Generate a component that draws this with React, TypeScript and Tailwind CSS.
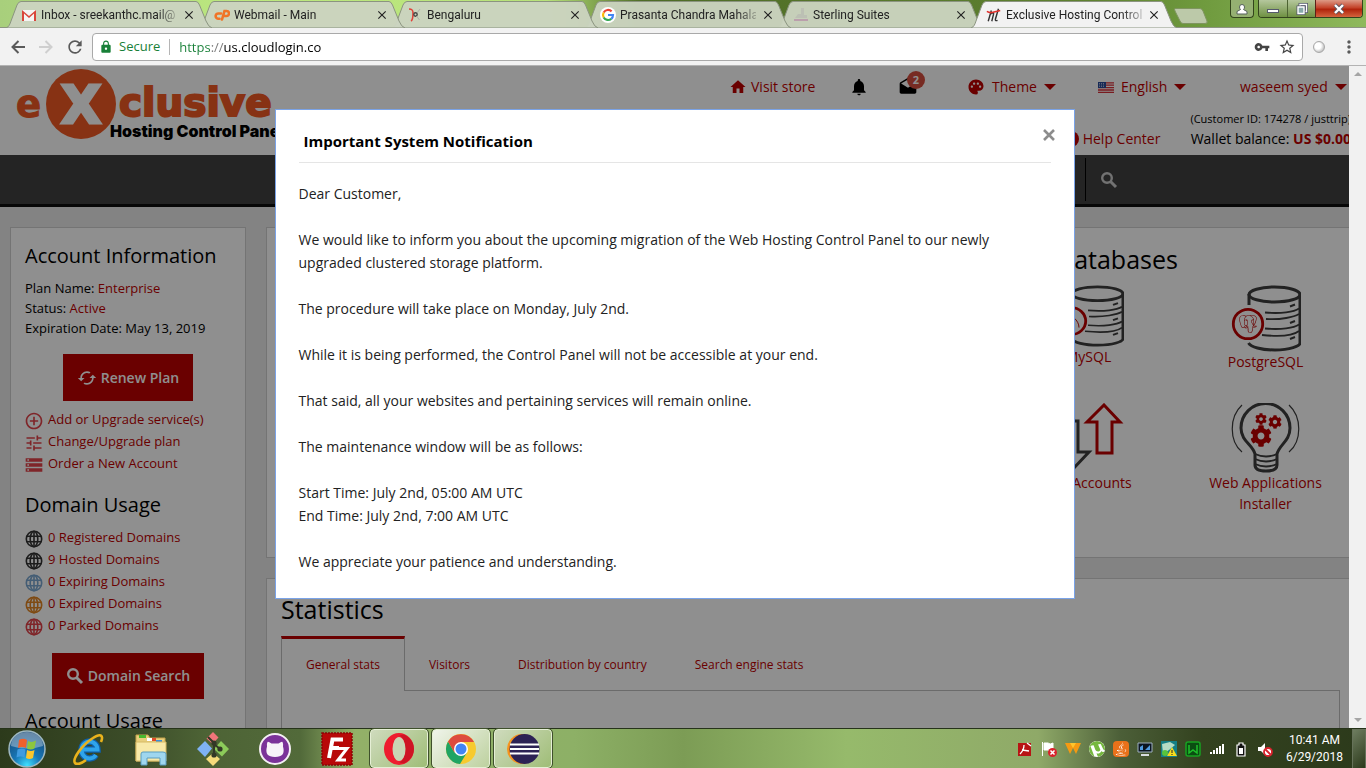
import type { ReactNode } from "react";
import {
  MdAddCircleOutline,
  MdClose,
  MdDrafts,
  MdHome,
  MdLock,
  MdMoreVert,
  MdNotifications,
  MdPalette,
  MdRefresh,
  MdStarBorder,
  MdStorage,
  MdSync,
  MdTune,
  MdVpnKey,
} from "react-icons/md";
import { FaCog, FaJava } from "react-icons/fa";
import { SiPostgresql, SiUtorrent } from "react-icons/si";

function GoogleMark() {
  return (
    <svg viewBox="0 0 16 16" className="size-4">
      <circle cx="8" cy="8" r="8" fill="#fff" />
      <g fill="none" strokeWidth="2.2">
        <path d="M11.6 4.4A5 5 0 0 0 3.7 5.5" stroke="#ea4335" />
        <path d="M3.7 5.5A5 5 0 0 0 3.7 10.5" stroke="#fbbc05" />
        <path d="M3.7 10.5A5 5 0 0 0 11.3 11.8" stroke="#34a853" />
        <path d="M11.3 11.8A5 5 0 0 0 13 8H8" stroke="#4285f4" />
      </g>
    </svg>
  );
}

function GmailMark() {
  return (
    <svg viewBox="0 0 16 16" className="size-4">
      <path d="M1 3h14v11H1z" fill="#f4f4f4" />
      <path d="M1 14V3l7 6 7-6v11h-2V6.6L8 11 3 6.6V14z" fill="#d9453a" />
    </svg>
  );
}

function PanelMark() {
  return (
    <svg viewBox="0 0 16 16" className="size-4" fill="none" stroke="#f07427" strokeWidth="2.600" strokeLinecap="round">
      <path d="M7 6.500H4.500A2.600 2.600 0 0 0 4 11.700H5.500" />
      <path d="M8 12.500L10.500 4H12.500A2.500 2.500 0 0 1 12.500 9H11" />
    </svg>
  );
}

function BirdMark() {
  return (
    <svg viewBox="0 0 16 16" className="size-4" fill="none">
      <path d="M2 2c4 0 4 2 4 4s0 7-2 8" stroke="#e2413a" strokeWidth="1.600" />
      <circle cx="8.500" cy="7.500" r="1.700" stroke="#444" strokeWidth="1.400" />
      <path d="M10 6l3-4M9.500 9l3 4" stroke="#b0b0aa" strokeWidth="1" />
    </svg>
  );
}

function SuitesMark() {
  return (
    <svg viewBox="0 0 16 16" className="size-4">
      <path d="M8 1h3v7h3v3H2l3-4h3z" fill="#bcc0b4" />
      <path d="M1 12h14v2H1z" fill="#bb9fac" />
    </svg>
  );
}

function HostMark() {
  return (
    <svg viewBox="0 0 18 18" className="size-[18px]" fill="none">
      <path d="M6 4L2.500 16M5 8Q9 5 8.500 8L6.500 16M14 2L10.500 14Q10.500 16 13 15" stroke="#333" strokeWidth="1.600" />
      <path d="M1 5Q4 7 8 6T16 4" stroke="#e0302c" strokeWidth="1.800" />
    </svg>
  );
}

function SearchGlyph() {
  return (
    <svg viewBox="0 0 18 18" className="size-[18px]" fill="none" stroke="currentColor">
      <circle cx="7" cy="7" r="4.800" strokeWidth="2.400" />
      <path d="M10.500 10.500L16 16" strokeWidth="3" />
    </svg>
  );
}

const TABS: { title: string; icon: ReactNode; active?: boolean }[] = [
  { title: "Inbox - sreekanthc.mail@", icon: <GmailMark /> },
  { title: "Webmail - Main", icon: <PanelMark /> },
  { title: "Bengaluru", icon: <BirdMark /> },
  { title: "Prasanta Chandra Mahala", icon: <GoogleMark /> },
  { title: "Sterling Suites", icon: <SuitesMark /> },
  { title: "Exclusive Hosting Control", icon: <HostMark />, active: true },
];

const Z = ["z-10", "z-[9]", "z-[8]", "z-[7]", "z-[6]", "z-20"];

function BrowserTab({ title, icon, active, z }: { title: string; icon: ReactNode; active?: boolean; z: string }) {
  return (
    <div className={`relative h-7 w-[193px] shrink-0 ${z}`}>
      <svg viewBox="0 0 206 28" className="absolute top-0 left-0 h-7 w-[206px]">
        <path
          d="M0 28C3 27 4 24 5 21L11 5Q12.500 1.500 15 1.500H190Q192 1.500 193.500 5L200 21Q202.500 27 206 28Z"
          fill={active ? "#f2f2f2" : "#cbd3bf"}
          fillOpacity={active ? 1 : 0.96}
          stroke="#8b9480"
        />
      </svg>
      <div className="relative flex h-7 items-center gap-1 pt-0.5 pl-[15px]">
        <span className="flex w-4 justify-center">{icon}</span>
        <span className="w-[136px] overflow-hidden whitespace-nowrap text-xs text-[#222] [mask-image:linear-gradient(to_right,black_85%,transparent_105%)]">
          {title}
        </span>
        <button aria-label={`Close ${title}`} className="flex size-4 items-center justify-center">
          <MdClose className="size-3.5 text-[#222]" />
        </button>
      </div>
    </div>
  );
}

function TabStrip() {
  return (
    <div className="relative flex h-7 shrink-0 border-b border-[#8b9480] bg-[linear-gradient(to_right,#a8cf7c,#bde97f_18%,#b8e27a_40%,#4e6b26_47%,#5f8230_80%,#6f9a3e_88%,#8fb95c)] pl-1.5 font-[Roboto,sans-serif]">
      {TABS.map((t, i) => (
        <BrowserTab key={t.title} {...t} z={Z[i]} />
      ))}
      <button aria-label="New tab" className="relative z-0 ml-2.5 h-7 w-9">
        <svg viewBox="0 0 36 28" className="h-7 w-9">
          <path d="M1 8.500H26Q28 8.500 29 11L33 21Q34 23.500 31 23.500H9Q7 23.500 6 21L1 11Q0 8.500 1 8.500Z" fill="#bcc9a9" stroke="#7f9560" />
        </svg>
      </button>
      <div className="ml-auto flex h-[18px] gap-1 pr-[3px]">
        <button aria-label="Profile" className="flex w-6 items-center justify-center rounded-b border border-t-0 border-[#33441c] bg-[#95b072]">
          <svg viewBox="0 0 12 12" className="size-3">
            <path d="M3.500 4a2.500 2.500 0 1 1 5 0Q8.500 5.500 7.500 6.500L11 8.500V11H1V8.500L4.500 6.500Q3.500 5.500 3.500 4Z" fill="#fff" stroke="#54605a" />
          </svg>
        </button>
        <div className="flex overflow-hidden rounded-b border border-t-0 border-[#33441c]">
          <button aria-label="Minimize" className="flex w-7 items-center justify-center bg-[linear-gradient(#b5c79d,#6f9142)]">
            <span className="mt-1 h-1 w-3 border border-[#555a6b] bg-white" />
          </button>
          <button aria-label="Restore" className="flex w-7 items-center justify-center border-l border-[#4d6332] bg-[linear-gradient(#b5c79d,#6f9142)]">
            <svg viewBox="0 0 12 12" className="size-3" fill="none">
              <path d="M4 3V1.500H10.500V8.500H9" stroke="#555a6b" strokeWidth="3" />
              <path d="M4 3V1.500H10.500V8.500H9" stroke="#fff" strokeWidth="1.400" />
              <path d="M2 4h6v6.500H2z" stroke="#555a6b" strokeWidth="3" />
              <path d="M2 4h6v6.500H2z" fill="#8aa" stroke="#fff" strokeWidth="1.400" />
            </svg>
          </button>
          <button aria-label="Close window" className="flex w-[47px] items-center justify-center border-l border-[#5c2018] bg-[linear-gradient(#dd9a86,#c4432a_45%,#b0240c_55%,#d4643e)]">
            <svg viewBox="0 0 12 12" className="size-3">
              <path d="M2 2L10 10M10 2L2 10" stroke="#5d5560" strokeWidth="4" />
              <path d="M2 2L10 10M10 2L2 10" stroke="#fff" strokeWidth="2.400" />
            </svg>
          </button>
        </div>
      </div>
    </div>
  );
}

function Arrow({ flip }: { flip?: boolean }) {
  return (
    <svg viewBox="0 0 14 14" className={`size-3.5 ${flip ? "rotate-180 text-[#cfcfcf]" : "text-[#5a5a5a]"}`} fill="none" stroke="currentColor" strokeWidth="2">
      <path d="M14 7H1.500M7.500 1L1.500 7L7.500 13" />
    </svg>
  );
}

function Toolbar() {
  return (
    <div className="flex h-[38px] shrink-0 items-center border-b border-[#b3b3b3] bg-[#f2f2f2] pl-[11px] text-[#5a5a5a]">
      <button aria-label="Back" className="w-7"><Arrow /></button>
      <button aria-label="Forward" className="w-[26px]"><Arrow flip /></button>
      <button aria-label="Reload" className="w-[27px]"><MdRefresh className="size-5" /></button>
      <div className="flex h-7 flex-1 items-center rounded-sm border border-[#a9a9a9] bg-white px-1.5">
        <MdLock className="size-3.5 text-[#188038]" />
        <label htmlFor="address" className="ml-1.5 text-[13px] text-[#188038]">Secure</label>
        <span className="mx-[9px] h-4 w-px bg-[#b5b5b5]" />
        <input
          id="address"
          defaultValue="https://us.cloudlogin.co"
          className="h-5 flex-1 bg-[linear-gradient(to_right,#188038_31px,#777_31px,#777_45px,#000_45px)] bg-clip-text text-[13px] text-transparent caret-black outline-none"
        />
        <MdVpnKey className="size-4 text-[#444]" />
        <MdStarBorder className="ml-2 size-[18px] text-[#444]" />
      </div>
      <span className="ml-2.5 size-3 rounded-full border border-[#a8a8a8] bg-[radial-gradient(circle_at_40%_40%,#fff_35%,#999)]" />
      <button aria-label="Menu" className="ml-3.5 w-[27px]"><MdMoreVert className="size-5" /></button>
    </div>
  );
}

function Caret() {
  return (
    <svg viewBox="0 0 12 6" className="h-1.5 w-3">
      <path d="M0 0H12L6 6Z" fill="currentColor" />
    </svg>
  );
}

function Logo() {
  return (
    <svg viewBox="0 0 330 80" className="h-20 w-[330px] [font-family:'DejaVu_Sans',sans-serif]" fontWeight="bold">
      <circle cx="81" cy="38" r="35" fill="#f15a24" />
      <text x="16" y="51" fontSize="37" fill="#f15a24" stroke="#f15a24">e</text>
      <text x="61" y="57" fontSize="52" fill="#fff" stroke="#fff" strokeWidth="3">X</text>
      <text x="119" y="50" fontSize="39" fill="#f15a24" stroke="#f15a24" strokeWidth="2">clusive</text>
      <text x="110" y="71" fontSize="16" className="font-black [font-family:Inter,sans-serif]">Hosting Control Panel</text>
    </svg>
  );
}

function Flag() {
  return (
    <svg viewBox="0 0 16 11" className="h-[11px] w-4">
      <path d="M0 0h16v11H0z" fill="#fff" />
      <path d="M0 .8h16M0 3.200h16M0 5.600h16M0 8h16M0 10.400h16" stroke="#d8303a" strokeWidth="1.300" />
      <path d="M0 0h8v6H0z" fill="#2a4c9c" />
      <path d="M1 1.500h6M1 3h6M1 4.500h6" stroke="#fff" strokeWidth=".6" strokeDasharray="1 1" />
    </svg>
  );
}

function SiteHeader() {
  return (
    <header className="flex h-[89px] shrink-0 justify-between bg-white">
      <Logo />
      <div className="shrink-0 text-sm text-[#bd0000]">
        <div className="grid h-[42px] grid-cols-[121px_48px_68px_131px_142px_109px] items-center whitespace-nowrap">
          <a href="#store" className="flex items-center gap-1"><MdHome className="size-[18px] -ml-px" />Visit store</a>
          <a href="#alerts" aria-label="Alerts" className="text-black"><MdNotifications className="size-5 -ml-0.5" /></a>
          <a href="#mail" aria-label="Messages" className="relative text-black">
            <MdDrafts className="size-5 -ml-px" />
            <span className="absolute -top-1.5 left-2 flex size-[18px] items-center justify-center rounded-full bg-[#d54e3f] text-[11px] font-bold text-white">2</span>
          </a>
          <button className="flex items-center gap-[7px]"><MdPalette className="size-[18px]" />Theme<Caret /></button>
          <button className="flex items-center gap-[7px]"><Flag />English<Caret /></button>
          <button className="flex items-center gap-[7px]">waseem syed<Caret /></button>
        </div>
        <div className="flex h-[46px] justify-end gap-[30px] whitespace-nowrap">
          <a href="#help" className="flex items-center gap-1 self-end pb-[5px]">
            <span className="flex size-4 items-center justify-center rounded-full bg-[#bd0000] text-[11px] font-bold text-white">?</span>
            Help Center
          </a>
          <div className="-mr-0.5 pt-0.5 text-right text-black">
            <div className="h-[17px] text-[11px] leading-[17px]">(Customer ID: 174278 / justtrip)</div>
            <div className="mt-0.5 leading-5">Wallet balance: <b className="text-[#bd0000]">US $0.00</b></div>
          </div>
        </div>
      </div>
    </header>
  );
}

function Globe({ tint }: { tint: string }) {
  return (
    <svg viewBox="0 0 18 18" className={`size-[18px] shrink-0 ${tint}`} fill="none" stroke="currentColor" strokeWidth="1.600">
      <circle cx="9" cy="9" r="7.700" />
      <ellipse cx="9" cy="9" rx="3.800" ry="7.700" />
      <path d="M9 1.300V16.700M1.800 6.200H16.200M1.800 11.800H16.200" />
    </svg>
  );
}

const ACCOUNT_LINKS = [
  { label: "Add or Upgrade service(s)", icon: <MdAddCircleOutline className="size-5 -mx-px shrink-0" /> },
  { label: "Change/Upgrade plan", icon: <MdTune className="size-5 -mx-px shrink-0" /> },
  { label: "Order a New Account", icon: <MdStorage className="size-5 -mx-px shrink-0" /> },
];

const DOMAIN_LINKS = [
  { label: "0 Registered Domains", tint: "text-[#333]" },
  { label: "9 Hosted Domains", tint: "text-[#333]" },
  { label: "0 Expiring Domains", tint: "text-[#7aa7d0]" },
  { label: "0 Expired Domains", tint: "text-[#e28522]" },
  { label: "0 Parked Domains", tint: "text-[#e2434a]" },
];

function Sidebar() {
  return (
    <aside className="h-[640px] w-[236px] shrink-0 border border-[#cfcfcf] bg-white px-3.5 pt-3.5 text-[13px] text-black">
      <h2 className="text-[20px] leading-7">Account Information</h2>
      <div className="mt-2 leading-5">
        <p>Plan Name: <a href="#plan" className="text-[#bd0000]">Enterprise</a></p>
        <p>Status: <span className="text-[#bd0000]">Active</span></p>
        <p>Expiration Date: May 13, 2019</p>
      </div>
      <button className="mx-auto mt-4 flex h-[47px] w-[130px] items-center justify-center gap-1 bg-[#bd0000] text-sm font-semibold text-white">
        <MdSync className="size-5 rotate-90" />Renew Plan
      </button>
      <ul className="mt-2 text-[#bd0000]">
        {ACCOUNT_LINKS.map((l) => (
          <li key={l.label}>
            <a href="#account" className="flex h-[22px] items-center gap-[5px] whitespace-nowrap">
              <span className="flex pt-0.5 text-[#e2434a]">{l.icon}</span>{l.label}
            </a>
          </li>
        ))}
      </ul>
      <h2 className="mt-4 text-[20px] leading-7">Domain Usage</h2>
      <ul className="mt-2 text-[#bd0000]">
        {DOMAIN_LINKS.map((l) => (
          <li key={l.label}>
            <a href="#domains" className="flex h-[22px] items-center gap-[5px] whitespace-nowrap">
              <span className="flex pt-0.5"><Globe tint={l.tint} /></span>{l.label}
            </a>
          </li>
        ))}
      </ul>
      <button className="mx-auto mt-4 flex h-[46px] w-[152px] items-center justify-center gap-1 bg-[#bd0000] text-sm font-semibold text-white">
        <SearchGlyph />Domain Search
      </button>
      <h2 className="mt-2 text-[20px] leading-7">Account Usage</h2>
    </aside>
  );
}

function DatabaseIcon({ small, children }: { small?: boolean; children: ReactNode }) {
  return (
    <svg viewBox="0 0 70 67" preserveAspectRatio="none" className={`w-[70px] ${small ? "h-[62px]" : "h-[67px]"}`} fill="none" stroke="#3d3d3d">
      <path d="M18 20V9M69 9V58C69 61 59 65 44 65C30 65 20 62 17.500 58" strokeWidth="3" />
      <ellipse cx="43.500" cy="9.500" rx="25.500" ry="7.500" strokeWidth="3" />
      <path d="M34 27.500C50 29 63 27 68 23.500M35 34C50 35 63 32 68 29M34 43.500C50 45 63 43 68 39.500M31 50C50 52 63 50 68 46" strokeWidth="1.800" />
      <path d="M59 21.500l5-2M59 38l5-2M59 54l5-2" strokeWidth="2" />
      <circle cx="17" cy="39" r="14.700" fill="#fff" stroke="#bd0000" strokeWidth="2.800" />
      {children}
    </svg>
  );
}

function TransferIcon() {
  return (
    <svg viewBox="0 0 70 70" className="size-[70px]" fill="none" strokeWidth="3">
      <path d="M15 18H24V49H35L18 67L3 49H15Z" stroke="#3d3d3d" />
      <path d="M50 2L66 19H58V50H43V19H33Z" stroke="#bd0000" />
    </svg>
  );
}

function BulbIcon() {
  return (
    <svg viewBox="0 0 70 70" className="size-[70px]" fill="none" stroke="#3d3d3d">
      <path d="M24 51C22 42 10 38 10 25A24.500 24.500 0 0 1 59 25C59 38 48 42 46 51V62Q46 68 35 68Q24 68 24 62Z" strokeWidth="3" />
      <path d="M24 51Q35 56 46 51M24 56Q35 61 46 56M24 61Q35 66 46 61" strokeWidth="1.800" />
      <path d="M11 2C-2 14 -2 38 11 49M58 2C71 14 71 38 58 49" strokeWidth="1.200" />
      <g stroke="none">
        <FaCog x="19" y="22" size={22} color="#bd0000" />
        <FaCog x="24" y="10" size={12} color="#bd0000" />
        <FaCog x="37" y="12" size={14} color="#bd0000" />
      </g>
    </svg>
  );
}

function Service({ label, icon }: { label: string; icon: ReactNode }) {
  return (
    <a href="#service" className="flex h-[118px] flex-col items-center text-center text-sm leading-[21px] text-[#bd0000]">
      {icon}
      <span className="-mt-px w-32">{label}</span>
    </a>
  );
}

function ServicesCard() {
  return (
    <section className="flex h-[331px] shrink-0 justify-end border border-[#cfcfcf] bg-white">
      <div className="w-[354px]">
        <h2 className="pt-[15px] pl-[56px] text-[25px] leading-8">Databases</h2>
        <div className="mt-[10px] grid grid-cols-2">
          <Service
            label="MySQL"
            icon={<DatabaseIcon small><path d="M9 31C17 31 25 38 25 46M9 31C12 38 12 42 17 45" stroke="#bd0000" /></DatabaseIcon>}
          />
          <Service
            label="PostgreSQL"
            icon={<DatabaseIcon><SiPostgresql x="8" y="30" size={18} color="#bd0000" strokeWidth="0" /></DatabaseIcon>}
          />
          <Service label="FTP Accounts" icon={<TransferIcon />} />
          <Service label="Web Applications Installer" icon={<BulbIcon />} />
        </div>
      </div>
    </section>
  );
}

function StatisticsCard() {
  const tabs = ["Visitors", "Distribution by country", "Search engine stats"];
  return (
    <section className="flex-1 border border-[#cfcfcf] bg-white px-3.5 pt-3.5">
      <h2 className="text-[25px] leading-8">Statistics</h2>
      <div className="mt-[11px] flex h-[55px] text-xs text-[#bd0000]">
        <button className="border-x border-t-3 border-x-[#bfbfbf] border-t-[#bd0000] px-6">General stats</button>
        <div className="flex flex-1 border-b border-[#bfbfbf]">
          {tabs.map((t) => (
            <button key={t} className="px-6 pt-1">{t}</button>
          ))}
        </div>
      </div>
      <div className="h-24 border-x border-[#bfbfbf]" />
    </section>
  );
}

function Notification() {
  return (
    <div role="dialog" aria-labelledby="notice-title" className="relative mt-[43px] w-[800px] max-w-full border border-[#7aa3e8] bg-white px-[23px] pt-5 pb-[25px] text-sm leading-[23px] text-[#222]">
      <h1 id="notice-title" className="pl-[5px] text-[15px] font-bold text-black">Important System Notification</h1>
      <button aria-label="Close notification" className="absolute top-[18px] right-[18px] text-[#8c8c8c]">
        <svg viewBox="0 0 14 14" className="size-3.5" stroke="currentColor" strokeWidth="2.600">
          <path d="M2 2L12 12M12 2L2 12" />
        </svg>
      </button>
      <hr className="mt-[9px] mb-[19px] border-[#e5e5e5]" />
      <div className="flex flex-col gap-[23px]">
        <p>Dear Customer,</p>
        <p>
          We would like to inform you about the upcoming migration of the Web Hosting Control Panel to our newly
          <br />
          upgraded clustered storage platform.
        </p>
        <p>The procedure will take place on Monday, July 2nd.</p>
        <p>While it is being performed, the Control Panel will not be accessible at your end.</p>
        <p>That said, all your websites and pertaining services will remain online.</p>
        <p>The maintenance window will be as follows:</p>
        <p>
          Start Time: July 2nd, 05:00 AM UTC
          <br />
          End Time: July 2nd, 7:00 AM UTC
        </p>
        <p>We appreciate your patience and understanding.</p>
      </div>
    </div>
  );
}

function StartOrb() {
  return (
    <svg viewBox="0 0 40 40" className="size-10">
      <defs>
        <radialGradient id="orb" cx=".5" cy=".95" r=".9">
          <stop offset="0" stopColor="#3fe0ff" />
          <stop offset=".4" stopColor="#1878b8" />
          <stop offset="1" stopColor="#164a78" />
        </radialGradient>
      </defs>
      <circle cx="20" cy="20" r="18" fill="url(#orb)" stroke="#9fb8c0" strokeWidth="1.500" />
      <path d="M4 17a16 14 0 0 1 32 0Q20 22 4 17Z" fill="#fff" fillOpacity=".35" />
      <path d="M12 11q4-2.500 8 0l-1 8q-4-2-8 0z" fill="#f0602c" />
      <path d="M21 12q4 2 8-.5l-1.500 8q-4 2-7.500 0z" fill="#8cc63f" />
      <path d="M10.500 20.500q4-2 8 0l-1 8q-4-2-8 0z" fill="#3f9be0" />
      <path d="M20 21q4 2 7.500 0l-1.500 8q-3.500 2-7 0z" fill="#fcc62c" />
    </svg>
  );
}

function ExplorerE() {
  return (
    <svg viewBox="0 0 32 32" className="size-8" fill="none">
      <path d="M9 16.500H24.500A8 8.500 0 1 0 23 22" stroke="#0f5fa8" strokeWidth="6.500" />
      <path d="M9 16.500H24.500A8 8.500 0 1 0 23 22" stroke="#2fa4ea" strokeWidth="4" />
      <path d="M28 9C31 2 27 0 20 5C9 12-1 26 2 30C4 32 9 30 13 27" stroke="#e9b21c" strokeWidth="2.600" />
    </svg>
  );
}

function FolderIcon() {
  return (
    <svg viewBox="0 0 34 34" className="size-[34px]">
      <path d="M2 3h12l2 3h15v23H2z" fill="#e9cf7c" stroke="#c3a24c" />
      <path d="M5 3h7v3H5z" fill="#4ab82e" />
      <path d="M13 6h8v3h-8z" fill="#fff" />
      <path d="M18 6h4v3h-4z" fill="#e04b28" />
      <path d="M22 8h6v3h-6z" fill="#3d8fd8" />
      <path d="M2 10h30v19H2z" fill="#f8e9a8" stroke="#d5b965" />
      <path d="M7 33V22Q7 20 9 20H29Q32 20 32 22V33H26V26H13V33Z" fill="#9fd6ee" stroke="#5a9dc0" />
    </svg>
  );
}

function GitIcon() {
  return (
    <svg viewBox="0 0 32 34" className="h-[34px] w-8">
      <path d="M16 0L21.500 5.500L15.500 12L9.500 6.500Z" fill="#f0757a" />
      <path d="M8 9L15 16.500L8 25L0 17Z" fill="#7fb2f5" />
      <path d="M24 9L32 17L25 24.500L17 17Z" fill="#8ccb5a" />
      <path d="M16 21L23 27L16 34L9 27Z" fill="#f6dc7c" />
      <path d="M11 5L17 11V23M17 12L23 17" stroke="#333826" strokeWidth="2" fill="none" />
      <g fill="#333826"><circle cx="17" cy="11" r="2.600" /><circle cx="17" cy="23" r="2.600" /><circle cx="23" cy="17" r="2.600" /></g>
    </svg>
  );
}

function CatIcon() {
  return (
    <svg viewBox="0 0 34 34" className="size-[34px]">
      <circle cx="17" cy="17" r="15" fill="#7b3399" stroke="#f5f0f5" strokeWidth="2" />
      <path d="M9.500 10Q10 9 13.500 11.500H20.500Q24 9 24.500 10Q25.500 12 25 14.500Q28 25 17 25Q6 25 9 14.500Q8.500 12 9.500 10Z" fill="#f7f3f8" />
    </svg>
  );
}

function FileZillaIcon() {
  return (
    <svg viewBox="0 0 32 34" className="h-[34px] w-8">
      <path d="M1 1H31V33H1Z" fill="#b80808" stroke="#8a0606" strokeWidth="1.500" strokeDasharray="2 1" />
      <path d="M8 26L11.500 7.500H22M10 16H18" stroke="#fff" strokeWidth="4" fill="none" />
      <path d="M16 16.500H26L17 28H25" stroke="#fff" strokeWidth="3" fill="none" />
    </svg>
  );
}

function OperaIcon() {
  return (
    <svg viewBox="0 0 32 34" className="h-[34px] w-8">
      <ellipse cx="16" cy="17" rx="15" ry="16" fill="#ee1c2e" />
      <path d="M16 4C24 4 24 30 16 30Q21 33 25 29Q31 24 31 17T25 5Q21 1 16 4Z" fill="#b90f1e" fillOpacity=".6" />
      <ellipse cx="16" cy="17" rx="6.500" ry="12" fill="#c9d5b4" />
    </svg>
  );
}

function ChromeIcon() {
  return (
    <svg viewBox="0 0 32 32" className="size-8">
      <circle cx="16" cy="16" r="15" fill="#f7ca2e" />
      <path d="M3 8.500A15 15 0 0 0 15 31L22 19.500L16 16L9.500 19.500Z" fill="#1fa463" />
      <path d="M3 8.500L9.500 19.500L16 9H29A15 15 0 0 0 3 8.500Z" fill="#dd4b3e" />
      <circle cx="16" cy="16" r="7" fill="#fff" />
      <circle cx="16" cy="16" r="5.500" fill="#4285f4" />
    </svg>
  );
}

function EclipseIcon() {
  return (
    <svg viewBox="0 0 34 32" className="h-8 w-[34px]">
      <circle cx="16" cy="16" r="15" fill="#f7941e" />
      <circle cx="18.500" cy="16" r="15" fill="#2c2255" />
      <path d="M4 11.500H33M4 16H33M4 20.500H33" stroke="#fff" strokeWidth="2" />
    </svg>
  );
}

const PINNED: { name: string; icon: ReactNode; open?: boolean; current?: boolean }[] = [
  { name: "Internet Explorer", icon: <ExplorerE /> },
  { name: "File Explorer", icon: <FolderIcon /> },
  { name: "Git", icon: <GitIcon /> },
  { name: "GitHub Desktop", icon: <CatIcon /> },
  { name: "FileZilla", icon: <FileZillaIcon /> },
  { name: "Opera", icon: <OperaIcon />, open: true },
  { name: "Chrome", icon: <ChromeIcon />, open: true, current: true },
  { name: "Eclipse", icon: <EclipseIcon />, open: true },
];

const TRAY: { name: string; icon: ReactNode }[] = [
  {
    name: "PDF",
    icon: <svg viewBox="0 0 16 16" className="size-4"><path d="M1 2h13v13H1z" fill="#b81414" /><path d="M3 13C6 10 7 7 7 4M5 9l7 1M10 2l4 3" stroke="#fff" strokeWidth="1.300" fill="none" /></svg>,
  },
  {
    name: "Action Center",
    icon: <svg viewBox="0 0 16 16" className="size-4"><path d="M1.500 1v14M3 2h4q2 2 5 0v7q-3 1-5 0H3z" fill="#fff" stroke="#fff" /><circle cx="11.500" cy="11.500" r="4.500" fill="#d8222c" /><path d="M9.500 9.500l4 4M13.500 9.500l-4 4" stroke="#fff" strokeWidth="1.500" /></svg>,
  },
  {
    name: "Wamp",
    icon: <svg viewBox="0 0 16 16" className="size-4"><path d="M0 2H16L11 13L8 7L5 13Z" fill="#f59a12" /><path d="M5 2l3 5 3-5z" fill="#ffc52c" /></svg>,
  },
  { name: "uTorrent", icon: <SiUtorrent className="size-4 rounded-full bg-white text-[#76b83f]" /> },
  { name: "Java", icon: <FaJava className="size-4 rounded-sm bg-[#e8711a] p-px text-white" /> },
  {
    name: "Display",
    icon: <svg viewBox="0 0 16 16" className="size-4"><path d="M1 2h14v9H1z" fill="#0b1522" stroke="#9fb0c0" /><path d="M3 9V6l3-2v5M8 9l5-5v5" fill="#4f9be0" /><path d="M4 14h8" stroke="#d8dde0" strokeWidth="2" /></svg>,
  },
  {
    name: "Network warning",
    icon: <svg viewBox="0 0 16 16" className="size-4"><path d="M0 0h16v16H0z" fill="#157f86" /><path d="M1 3l8-2 5 3-6 5-6 4z" fill="#b5dcc5" /><circle cx="4" cy="12" r="3" fill="#58c43c" /><path d="M11 6L16 15H6Z" fill="#f8dc1e" /><path d="M11 9v3M11 13v1" stroke="#222" /></svg>,
  },
  {
    name: "Webroot",
    icon: <svg viewBox="0 0 16 16" className="size-4" fill="none"><rect x="1" y="1" width="14" height="14" rx="2" fill="#0b4d12" stroke="#17a321" strokeWidth="1.500" /><path d="M4 4v8l4-3 4 3V4" stroke="#1fc02b" strokeWidth="1.500" /></svg>,
  },
  {
    name: "Signal",
    icon: <svg viewBox="0 0 16 16" className="size-4"><path d="M1 13v-2h2v2zM4 13v-4h2v4zM7 13V7h2v6zM10 13V5h2v8zM13 13V3h2v10z" fill="#fff" /></svg>,
  },
  {
    name: "Battery",
    icon: <svg viewBox="0 0 16 16" className="size-4"><path d="M6 2h4v2h2v11H4V4h2z" fill="#111" stroke="#fff" strokeWidth="1.200" /><path d="M6 7h4v6H6z" fill="#fff" /></svg>,
  },
  {
    name: "Volume muted",
    icon: <svg viewBox="0 0 16 16" className="size-4"><path d="M1 6h3l4-4v12l-4-4H1z" fill="#fff" /><circle cx="11" cy="11" r="4" fill="#fff" stroke="#d8222c" strokeWidth="1.800" /><path d="M8.500 8.500l5 5" stroke="#d8222c" strokeWidth="1.800" /></svg>,
  },
];

function Taskbar() {
  return (
    <footer className="flex h-10 shrink-0 items-center border-t border-[#26331a] bg-[linear-gradient(to_right,#2c3a1b,#3c4d29_10%,#4d6335_15%,#526a3a_22%,#93b068_26%,#8db066_42%,#7c9c55_50%,#96ba6b_62%,#8fa968_76%,#4c5f38_82%,#33421f_88%,#2c3a1b)] text-white">
      <button aria-label="Start" className="mr-[11px] ml-[7px] h-10 w-10"><StartOrb /></button>
      {PINNED.map((p) => (
        <button
          key={p.name}
          aria-label={p.name}
          className={`mx-0.5 flex h-[39px] w-[58px] shrink-0 items-center justify-center ${
            p.open ? "rounded-sm border border-[#e5efd5] outline outline-[#3f502c] " : ""
          }${p.current ? "bg-[linear-gradient(135deg,#f0f4ea,#bdd19f)]" : p.open ? "bg-[linear-gradient(135deg,#cfdbbd,#9fbd77)]" : ""}`}
        >
          {p.icon}
        </button>
      ))}
      <div className="ml-auto flex gap-2">
        {TRAY.map((t) => (
          <button key={t.name} aria-label={t.name} className="size-4">{t.icon}</button>
        ))}
      </div>
      <div className="w-[79px] pl-1 text-center font-[Roboto,sans-serif] text-xs leading-[17px]">
        <div>10:41 AM</div>
        <div>6/29/2018</div>
      </div>
      <button aria-label="Show desktop" className="h-10 w-3.5 border border-[#66725a] bg-[linear-gradient(135deg,#6e7d60,#2c3a1b)]" />
    </footer>
  );
}

export default function App() {
  return (
    <div className="flex h-screen flex-col overflow-hidden font-['Open_Sans',sans-serif]">
      <TabStrip />
      <Toolbar />
      <div className="flex min-h-0 flex-1">
        <main className="relative flex min-w-0 flex-1 flex-col overflow-hidden bg-[#e9e9e9]">
          <SiteHeader />
          <nav className="flex h-[52px] shrink-0 justify-end border-b-3 border-[#0e0e0e] bg-[#404040] py-[3px]">
            <div className="flex w-[264px] items-center border-l border-black pl-3.5">
              <button aria-label="Search" className="text-[#ccc]"><SearchGlyph /></button>
            </div>
          </nav>
          <div className="-mr-1.5 flex min-h-0 flex-1 gap-5 overflow-hidden pt-5 pl-2.5">
            <Sidebar />
            <div className="flex min-w-0 flex-1 flex-col gap-5">
              <ServicesCard />
              <StatisticsCard />
            </div>
          </div>
          <div className="absolute inset-0 flex items-start justify-center bg-black/44">
            <Notification />
          </div>
        </main>
        <div className="flex w-[17px] shrink-0 flex-col items-center justify-between bg-[#f1f1f1] py-1.5 text-[#a5a5a5]">
          <svg viewBox="0 0 8 4" className="h-1 w-2"><path d="M4 0L8 4H0Z" fill="currentColor" /></svg>
          <svg viewBox="0 0 8 4" className="h-1 w-2"><path d="M4 4L8 0H0Z" fill="currentColor" /></svg>
        </div>
      </div>
      <Taskbar />
    </div>
  );
}
